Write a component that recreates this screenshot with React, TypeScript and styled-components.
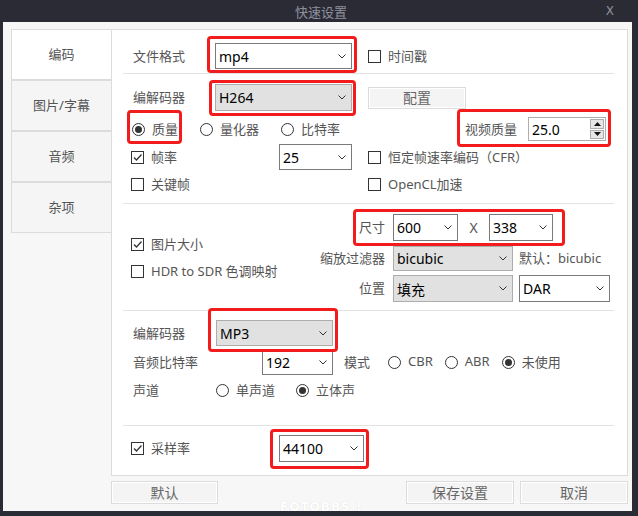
import React from 'react'
import styled, { createGlobalStyle } from 'styled-components'

const colors = {
	FRAME: '#2b2b36',
	TITLE: '#8e919c',
	BODY: '#f7f7f7',
	PANEL: '#ffffff',
	LINE: '#e3e3e3',
	TAB_LINE: '#dcdcdc',
	TAB_BG: '#f5f5f5',
	LABEL: '#555555',
	TEXT: '#000000',
	BOX: '#333333',
	FIELD: '#7a7a7a',
	FIELD_GREY: '#adadad',
	GREY_BG: '#e1e1e1',
	RED: '#f21c1c',
	BUTTON: '#f4f4f4',
}

const GlobalStyle = createGlobalStyle`
	html, body {
		margin: 0;
		padding: 0;
		background: ${colors.FRAME};
	}
	body {
		font-family: 'Noto Sans', 'Noto Sans CJK SC', sans-serif;
	}
	* {
		box-sizing: border-box;
	}
`

const tabs = ['编码', '图片/字幕', '音频', '杂项']

const Chevron = () => (
	<svg width="8" height="5" viewBox="0 0 8 5">
		<polyline points="0.5,0.5 4,4 7.5,0.5" fill="none" stroke="#333" strokeWidth="1" />
	</svg>
)

type SelectProps = { value: string; w: number; h?: number; grey?: boolean; ml?: number }

const Select = ({ value, w, h = 26, grey, ml = 0 }: SelectProps) => (
	<SelectBox $w={w} $h={h} $grey={grey} $ml={ml}>
		<span>{value}</span>
		<Chevron />
	</SelectBox>
)

const Check = ({ label, checked, ml = 0 }: { label: string; checked?: boolean; ml?: number }) => (
	<ToggleItem $ml={ml}>
		<CheckBox>
			{checked && (
				<svg width="11" height="11" viewBox="0 0 11 11">
					<polyline points="2,5.5 4.5,8 9.5,2.5" fill="none" stroke="#333" strokeWidth="1.3" />
				</svg>
			)}
		</CheckBox>
		<Label>{label}</Label>
	</ToggleItem>
)

const Radio = ({ label, checked, ml = 0 }: { label: string; checked?: boolean; ml?: number }) => (
	<ToggleItem $ml={ml}>
		<RadioCircle>{checked && <RadioDot />}</RadioCircle>
		<Label>{label}</Label>
	</ToggleItem>
)

const Arrow = ({ up }: { up?: boolean }) => (
	<svg width="7" height="4" viewBox="0 0 7 4">
		<polygon points={up ? '0,4 3.5,0 7,4' : '0,0 3.5,4 7,0'} fill="#111" />
	</svg>
)

export default function App() {
	return (
		<>
			<GlobalStyle />
			<Window>
				<TitleBar>
					<Title>快速设置</Title>
					<Close>X</Close>
				</TitleBar>
				<Body>
					<Main>
						<Sidebar>
							{tabs.map((t, i) => (
								<Tab key={t} $active={i === 0}>
									{t}
								</Tab>
							))}
						</Sidebar>
						<Panel>
							<Group $h={44} $pt={13}>
								<Row $h={26} $pl={10}>
									<Label $w={82}>文件格式</Label>
									<Mark $t={7} $r={5} $b={4} $l={8}>
										<Select value="mp4" w={137} />
									</Mark>
									<Check label="时间戳" ml={16} />
								</Row>
							</Group>

							<Group $h={130} $pt={10}>
								<Row $h={27} $pl={10}>
									<Label $w={82}>编解码器</Label>
									<Mark $t={4} $r={4} $b={5} $l={6}>
										<Select value="H264" w={137} h={27} grey />
									</Mark>
									<PlainButton $w={98} $h={22} $ml={16}>
										配置
									</PlainButton>
								</Row>
								<Row $h={36} $pl={9}>
									<Mark $t={9} $r={4} $b={4} $l={5}>
										<Radio label="质量" checked />
									</Mark>
									<Radio label="量化器" ml={22} />
									<Radio label="比特率" ml={22} />
									<Mark $t={8} $r={5} $b={6} $l={8} $ml={125}>
										<Label>视频质量</Label>
										<Spin>
											<SpinValue>25.0</SpinValue>
											<SpinButtons>
												<SpinButton>
													<Arrow up />
												</SpinButton>
												<SpinButton>
													<Arrow />
												</SpinButton>
											</SpinButtons>
										</Spin>
									</Mark>
								</Row>
								<Row $h={20} $pl={8}>
									<Cell $w={148}>
										<Check label="帧率" checked />
									</Cell>
									<Select value="25" w={73} />
									<Check label="恒定帧速率编码（CFR）" ml={16} />
								</Row>
								<Row $h={34} $pl={8}>
									<Cell $w={237}>
										<Check label="关键帧" />
									</Cell>
									<Check label="OpenCL加速" />
								</Row>
							</Group>

							<Group $h={107} $split>
								<Column $w={197} $pt={27} $pl={8}>
									<Row $h={27}>
										<Check label="图片大小" checked />
									</Row>
									<Row $h={27}>
										<Check label="HDR to SDR 色调映射" />
									</Row>
								</Column>
								<Column $pt={10}>
									<Row $h={27} $pl={39}>
										<Mark $t={5} $r={12} $b={5} $l={6}>
											<Label>尺寸</Label>
											<Select value="600" w={65} h={27} ml={8} />
											<Times>X</Times>
											<Select value="338" w={64} h={27} />
										</Mark>
									</Row>
									<Row $h={25} $mt={5}>
										<Label $w={65} $right>
											缩放过滤器
										</Label>
										<Select value="bicubic" w={120} h={25} grey ml={8} />
										<Label $ml={6}>默认：bicubic</Label>
									</Row>
									<Row $h={27} $mt={4}>
										<Label $w={65} $right>
											位置
										</Label>
										<Select value="填充" w={120} h={27} grey ml={8} />
										<Select value="DAR" w={91} h={27} ml={6} />
									</Row>
								</Column>
							</Group>

							<Group $h={115} $pt={9}>
								<Row $h={26} $pl={10}>
									<Label $w={83}>编解码器</Label>
									<Mark $t={12} $r={5} $b={6} $l={8}>
										<Select value="MP3" w={117} grey />
									</Mark>
								</Row>
								<Row $h={32} $pl={10}>
									<Label $w={129}>音频比特率</Label>
									<Select value="192" w={71} />
									<Label $ml={11}>模式</Label>
									<Radio label="CBR" ml={18} />
									<Radio label="ABR" ml={12} />
									<Radio label="未使用" ml={12} checked />
								</Row>
								<Row $h={24} $pl={10}>
									<Label $w={83}>声道</Label>
									<Radio label="单声道" />
									<Radio label="立体声" ml={21} checked />
								</Row>
							</Group>

							<Group $pt={9} $last>
								<Row $h={26} $pl={8}>
									<Cell $w={148}>
										<Check label="采样率" checked />
									</Cell>
									<Mark $t={6} $r={5} $b={7} $l={9}>
										<Select value="44100" w={85} h={27} />
									</Mark>
								</Row>
							</Group>
						</Panel>
					</Main>
					<Footer>
						<PlainButton $w={107} $h={23}>
							默认
						</PlainButton>
						<ButtonGroup>
							<PlainButton $w={108} $h={23}>
								保存设置
							</PlainButton>
							<PlainButton $w={108} $h={23}>
								取消
							</PlainButton>
						</ButtonGroup>
					</Footer>
				</Body>
				<Watermark>FOTOBBS !</Watermark>
			</Window>
		</>
	)
}

const Window = styled.div`
	position: relative;
	width: 638px;
	height: 516px;
	background: ${colors.FRAME};
	display: flex;
	flex-direction: column;
	overflow: hidden;
`

const TitleBar = styled.div`
	height: 22px;
	display: grid;
	grid-template-columns: 1fr auto 1fr;
	align-items: center;
	color: ${colors.TITLE};
	font-size: 13px;
`

const Title = styled.div`
	grid-column: 2;
	padding-left: 4px;
`

const Close = styled.div`
	justify-self: end;
	padding-right: 24px;
	font-family: 'DejaVu Sans', sans-serif;
	font-size: 12px;
`

const Body = styled.div`
	flex: 1;
	margin: 0 6px 5px 3px;
	background: ${colors.BODY};
	padding: 7px 4px 0 8px;
	display: flex;
	flex-direction: column;
`

const Main = styled.div`
	display: flex;
	height: 447px;
`

const Sidebar = styled.div`
	width: 100px;
	display: flex;
	flex-direction: column;
`

const Tab = styled.div<{ $active?: boolean }>`
	height: 51px;
	border: 1px solid ${colors.TAB_LINE};
	border-right: none;
	background: ${p => (p.$active ? '#ffffff' : colors.TAB_BG)};
	display: flex;
	align-items: center;
	justify-content: center;
	padding-bottom: 2px;
	color: ${colors.LABEL};
	font-size: 13px;
`

const Panel = styled.div`
	width: 517px;
	background: ${colors.PANEL};
	border: 1px solid ${colors.TAB_LINE};
	display: flex;
	flex-direction: column;
`

const Group = styled.div<{ $h?: number; $pt?: number; $split?: boolean; $last?: boolean }>`
	margin: 0 13px 0 11px;
	height: ${p => (p.$h ? `${p.$h}px` : 'auto')};
	flex: ${p => (p.$last ? 1 : 'none')};
	padding-top: ${p => p.$pt || 0}px;
	border-bottom: ${p => (p.$last ? 'none' : `1px solid ${colors.LINE}`)};
	display: flex;
	flex-direction: ${p => (p.$split ? 'row' : 'column')};
`

const Column = styled.div<{ $w?: number; $pt?: number; $pl?: number }>`
	width: ${p => (p.$w ? `${p.$w}px` : 'auto')};
	flex: ${p => (p.$w ? 'none' : 1)};
	padding-top: ${p => p.$pt || 0}px;
	padding-left: ${p => p.$pl || 0}px;
	display: flex;
	flex-direction: column;
`

const Row = styled.div<{ $h: number; $pl?: number; $mt?: number }>`
	height: ${p => p.$h}px;
	margin-top: ${p => p.$mt || 0}px;
	padding-left: ${p => p.$pl || 0}px;
	display: flex;
	align-items: center;
	flex: none;
`

const Cell = styled.div<{ $w: number }>`
	width: ${p => p.$w}px;
	flex: none;
	display: flex;
	align-items: center;
`

const Label = styled.span<{ $w?: number; $right?: boolean; $ml?: number }>`
	width: ${p => (p.$w ? `${p.$w}px` : 'auto')};
	margin-left: ${p => p.$ml || 0}px;
	padding-bottom: 2px;
	text-align: ${p => (p.$right ? 'right' : 'left')};
	flex: none;
	white-space: nowrap;
	color: ${colors.LABEL};
	font-size: 13px;
`

const SelectBox = styled.div<{ $w: number; $h: number; $grey?: boolean; $ml: number }>`
	width: ${p => p.$w}px;
	height: ${p => p.$h}px;
	margin-left: ${p => p.$ml}px;
	flex: none;
	border: 1px solid ${p => (p.$grey ? colors.FIELD_GREY : colors.FIELD)};
	background: ${p => (p.$grey ? colors.GREY_BG : '#ffffff')};
	display: flex;
	align-items: center;
	justify-content: space-between;
	padding: 0 5px 0 3px;
	color: ${colors.TEXT};
	font-size: 14px;
`

const Mark = styled.div<{ $t: number; $r: number; $b: number; $l: number; $ml?: number }>`
	position: relative;
	display: flex;
	align-items: center;
	flex: none;
	margin-left: ${p => p.$ml || 0}px;

	&::after {
		content: '';
		position: absolute;
		top: -${p => p.$t}px;
		right: -${p => p.$r}px;
		bottom: -${p => p.$b}px;
		left: -${p => p.$l}px;
		border: 3px solid ${colors.RED};
		border-radius: 4px;
		pointer-events: none;
	}
`

const ToggleItem = styled.div<{ $ml: number }>`
	display: flex;
	align-items: center;
	gap: 7px;
	margin-left: ${p => p.$ml}px;
	flex: none;
`

const CheckBox = styled.div`
	width: 13px;
	height: 13px;
	border: 1px solid ${colors.BOX};
	background: #ffffff;
	display: flex;
	align-items: center;
	justify-content: center;
`

const RadioCircle = styled.div`
	width: 13px;
	height: 13px;
	border: 1px solid ${colors.BOX};
	border-radius: 50%;
	background: #ffffff;
	display: flex;
	align-items: center;
	justify-content: center;
`

const RadioDot = styled.div`
	width: 7px;
	height: 7px;
	border-radius: 50%;
	background: ${colors.BOX};
`

const Spin = styled.div`
	width: 78px;
	height: 24px;
	margin-left: 11px;
	border: 1px solid ${colors.FIELD_GREY};
	background: #ffffff;
	display: flex;
	align-items: center;
	padding: 1px;
`

const SpinValue = styled.span`
	flex: 1;
	padding-left: 2px;
	font-size: 14px;
	color: ${colors.TEXT};
`

const SpinButtons = styled.div`
	width: 14px;
	height: 100%;
	display: flex;
	flex-direction: column;
	gap: 1px;
`

const SpinButton = styled.div`
	flex: 1;
	background: #e6e6e6;
	border: 1px solid ${colors.FIELD_GREY};
	display: flex;
	align-items: center;
	justify-content: center;
`

const Times = styled.span`
	width: 31px;
	flex: none;
	text-align: center;
	color: ${colors.LABEL};
	font-size: 14px;
`

const PlainButton = styled.div<{ $w: number; $h: number; $ml?: number }>`
	width: ${p => p.$w}px;
	height: ${p => p.$h}px;
	margin-left: ${p => p.$ml || 0}px;
	flex: none;
	background: ${colors.BUTTON};
	border: 1px solid ${colors.TAB_LINE};
	box-shadow: inset 0 0 0 1px #ffffff;
	display: flex;
	align-items: center;
	justify-content: center;
	padding-bottom: 1px;
	color: #666666;
	font-size: 14px;
`

const Footer = styled.div`
	margin: 5px 0 0 100px;
	display: flex;
	justify-content: space-between;
`

const ButtonGroup = styled.div`
	display: flex;
	gap: 6px;
`

const Watermark = styled.div`
	position: absolute;
	left: 280px;
	top: 500px;
	color: #ffffff;
	font-family: 'DejaVu Sans', sans-serif;
	font-weight: bold;
	font-size: 12px;
	letter-spacing: 1px;
	text-shadow: 0 0 1px rgba(0, 0, 0, 0.15);
`
